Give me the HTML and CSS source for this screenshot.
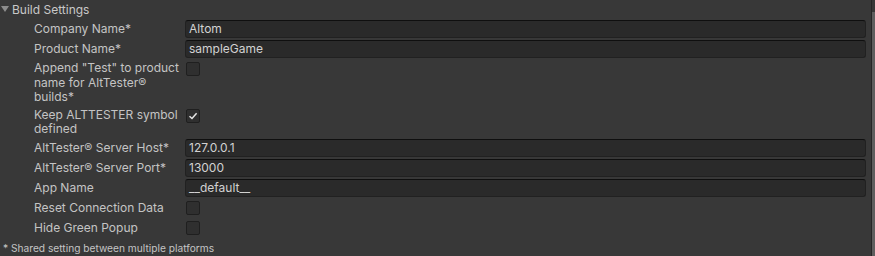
FILE: index.html
```html
<!DOCTYPE html>
<html>
<head>
<meta charset="utf-8">
<link rel="stylesheet" href="styles.css">
</head>
<body>
<div class="panel">
  <div class="content">
    <div class="header"><span class="arrow"></span><span>Build Settings</span></div>
    <div class="row"><div class="label">Company Name*</div><div class="field">Altom</div></div>
    <div class="row"><div class="label">Product Name*</div><div class="field">sampleGame</div></div>
    <div class="row multi"><div class="label">Append "Test" to product name for AltTester® builds*</div><div class="check"></div></div>
    <div class="row multi two"><div class="label">Keep ALTTESTER symbol defined</div><div class="check on"><svg width="10" height="10" viewBox="0 0 10 10"><path d="M1.5 5.2 L4 7.5 L8.6 2.3" fill="none" stroke="#e6e6e6" stroke-width="1.5"/></svg></div></div>
    <div class="row"><div class="label">AltTester® Server Host*</div><div class="field">127.0.0.1</div></div>
    <div class="row"><div class="label">AltTester® Server Port*</div><div class="field">13000</div></div>
    <div class="row"><div class="label">App Name</div><div class="field">__default__</div></div>
    <div class="row"><div class="label">Reset Connection Data</div><div class="check"></div></div>
    <div class="row"><div class="label">Hide Green Popup</div><div class="check"></div></div>
    <div class="footer">* Shared setting between multiple platforms</div>
  </div>
  <div class="scrollbar"><div class="thumb"></div></div>
</div>
</body>
</html>
```
FILE: styles.css
```css
html, body {
  margin: 0;
  padding: 0;
  background: #383838;
}
body {
  width: 875px;
  height: 256px;
  overflow: hidden;
  font-family: Inter, "Noto Sans", sans-serif;
  font-size: 12px;
  color: #c4c4c4;
}
.panel {
  display: flex;
  height: 256px;
}
.content {
  width: 871px;
  display: flex;
  flex-direction: column;
  gap: 2px;
}
.header {
  height: 18px;
  display: flex;
  align-items: center;
  gap: 3px;
  padding-left: 1px;
  color: #c8c8c8;
}
.arrow {
  width: 0;
  height: 0;
  border-left: 4px solid transparent;
  border-right: 4px solid transparent;
  border-top: 6px solid #8c8c8c;
}
.row {
  display: grid;
  grid-template-columns: 151px 1fr;
  padding-left: 34px;
  padding-right: 5px;
  min-height: 18px;
}
.label {
  line-height: 18px;
  white-space: nowrap;
}
.multi .label {
  white-space: normal;
  width: 146px;
  line-height: 14.5px;
  padding: 1px 0 0;
}
.multi.two .label {
  line-height: 14px;
  padding: 1px 0 1px;
}
.field {
  height: 18px;
  box-sizing: border-box;
  background: #2a2a2a;
  border: 1px solid #212121;
  border-top-color: #0f0f0f;
  border-radius: 3px;
  padding-left: 3px;
  line-height: 16px;
  color: #d2d2d2;
}
.check {
  width: 14px;
  height: 14px;
  box-sizing: border-box;
  margin: 2px 0 0 1px;
  background: #2f2f2f;
  border: 1px solid #1f1f1f;
  border-radius: 2px;
  display: flex;
  align-items: center;
  justify-content: center;
}
.footer {
  font-size: 10.2px;
  line-height: 14px;
  padding: 2px 0 0 3px;
  color: #c4c4c4;
}
.scrollbar {
  width: 4px;
  height: 256px;
  display: flex;
  flex-direction: column;
  border-left: 1px solid #262626;
  box-sizing: border-box;
}
.thumb {
  margin-top: 12px;
  flex: 1;
  background: #5e5e5e;
}
```
